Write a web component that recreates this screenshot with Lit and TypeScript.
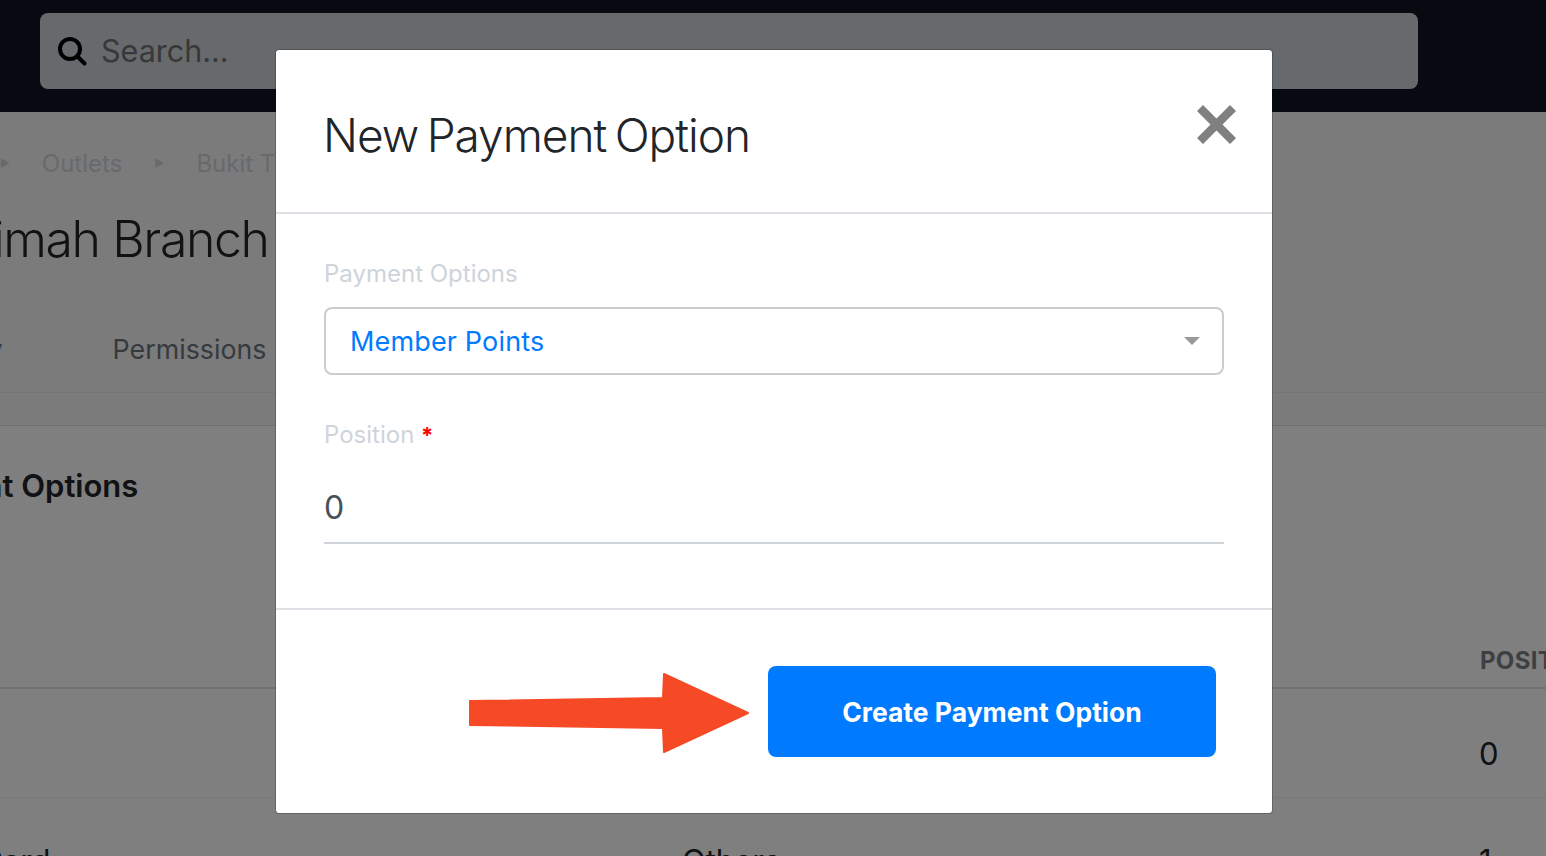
import { LitElement, html, css } from "lit";
import { customElement } from "lit/decorators.js";

@customElement("app-root")
export class AppRoot extends LitElement {
  static styles = css`
    :host { display: block; position: relative; width: 1546px; height: 856px; overflow: hidden; font-family: Inter, "Liberation Sans", sans-serif; background: #fff; color: #212529; }
    .page { display: flex; flex-direction: column; height: 856px; overflow: hidden; }
    .topbar { flex: none; height: 112px; box-sizing: border-box; padding: 13px 128px 23px 40px; background: #101424; }
    .search { display: flex; align-items: center; gap: 14px; height: 76px; box-sizing: border-box; padding: 0 17px 1px; border-radius: 8px; background: #cdd4d8; font-size: 30.5px; }
    .search svg { display: block; }
    .search span { color: #707070; }
    .head { flex: none; height: 281px; box-sizing: border-box; background: #f6f7f9; border-bottom: 1px solid #e9ebee; overflow: hidden; }
    .crumbs { display: flex; align-items: center; height: 26px; margin: 38px 0 0 -140px; font-size: 24px; color: #ced4da; gap: 32px; white-space: nowrap; }
    .crumbs i { font-style: normal; font-size: 11px; }
    h1 { margin: 33px 0 0 -158px; font-size: 50px; font-weight: 350; line-height: 60px; letter-spacing: -1.4px; white-space: nowrap; color: #212529; }
    .tabs { display: flex; gap: 110px; margin: 64px 0 0 -118px; font-size: 26.8px; line-height: 32px; color: #6c757d; white-space: nowrap; }
    .gap { flex: none; height: 32px; background: #f6f7f9; border-bottom: 1px solid #dfe1e4; }
    .card { flex: 1; background: #fff; }
    .card h2 { margin: 40px 0 0 -118px; font-size: 31px; font-weight: 600; line-height: 40px; white-space: nowrap; }
    .thead { height: 183px; box-sizing: border-box; padding-bottom: 12px; border-bottom: 2px solid #dee2e6; align-items: end; }
    .cols { display: grid; grid-template-columns: 682px 797px 1fr; }
    .th { margin-left: 1px; font-size: 24px; font-weight: 700; color: #7b8087; letter-spacing: .3px; white-space: nowrap; }
    .row { height: 109px; box-sizing: border-box; border-bottom: 1px solid #f1f3f5; padding-top: 46px; font-size: 31px; line-height: 38px; white-space: nowrap; }
    .row + .row { border: 0; padding-top: 44px; }
    .row .clip { margin-left: -117px; }
    .overlay { position: absolute; inset: 0; background: rgba(0,0,0,.5); }
    .modal { position: absolute; left: 275px; top: 49px; width: 998px; height: 765px; box-sizing: border-box; display: flex; flex-direction: column; background: #fff; border: 1px solid rgba(0,0,0,.2); background-clip: padding-box; border-radius: 4px; }
    .mhead { flex: none; height: 164px; box-sizing: border-box; display: flex; align-items: center; justify-content: space-between; padding: 8px 36px 0 47px; border-bottom: 2px solid #dee2e6; }
    .mhead h3 { margin: 0; font-size: 46px; font-weight: 350; line-height: 60px; white-space: nowrap; color: #212529; letter-spacing: -1px; word-spacing: -3.5px; }
    .mhead svg { display: block; margin-top: -22px; }
    .mbody { flex: 1; box-sizing: border-box; padding: 45px 48px 0; display: flex; flex-direction: column; }
    label { display: block; font-size: 24px; line-height: 30px; color: #ced4da; }
    label b { color: #f00; font-weight: 700; font-size: 22px; }
    .select { display: flex; align-items: center; justify-content: space-between; height: 68px; box-sizing: border-box; margin-top: 18px; padding: 0 22px 0 24px; border: 2px solid #ccc; border-radius: 8px; color: #007bff; font-size: 27px; letter-spacing: .15px; }
    .caret { width: 0; height: 0; border-left: 8px solid transparent; border-right: 8px solid transparent; border-top: 8px solid #999; }
    .pos { margin-top: 45px; }
    .input { height: 77px; box-sizing: border-box; margin-top: 17px; padding-top: 5px; border-bottom: 2px solid #ced4da; display: flex; align-items: center; font-size: 32px; color: #495057; }
    .mfoot { flex: none; height: 205px; box-sizing: border-box; display: flex; justify-content: flex-end; padding: 56px 56px 0 0; border-top: 2px solid #dee2e6; }
    .btn { width: 448px; height: 91px; border: 0; padding: 0; border-radius: 8px; background: #007bff; color: #fff; font: 700 26.5px Inter, "Liberation Sans", sans-serif; }
    .arrow { position: absolute; left: 469px; top: 673px; display: block; }
  `;

  render() {
    return html`
      <div class="page">
        <div class="topbar">
          <div class="search">
            <svg width="30" height="30" viewBox="0 0 30 30" fill="none" stroke="#000" stroke-width="4" stroke-linecap="round"><circle cx="13" cy="13" r="10"/><path d="M20.5 20.5 L27.5 27.5"/></svg>
            <span>Search...</span>
          </div>
        </div>
        <div class="head">
          <div class="crumbs"><span>Merchant</span><i>▶</i><span>Outlets</span><i>▶</i><span>Bukit Timah Branch</span></div>
          <h1>Bukit Timah Branch</h1>
          <div class="tabs"><span>Summary</span><span>Permissions</span></div>
        </div>
        <div class="gap"></div>
        <div class="card">
          <h2>Payment Options</h2>
          <div class="thead cols"><span></span><span></span><span class="th">POSITION</span></div>
          <div class="row cols"><span></span><span></span><span>0</span></div>
          <div class="row cols"><span class="clip">Credit Card</span><span>Others</span><span>1</span></div>
        </div>
      </div>
      <div class="overlay"></div>
      <div class="modal">
        <div class="mhead">
          <h3>New Payment Option</h3>
          <svg width="39" height="39" viewBox="0 0 39 39"><path d="M6 0 L19.5 13.5 L33 0 L39 6 L25.5 19.5 L39 33 L33 39 L19.5 25.5 L6 39 L0 33 L13.5 19.5 L0 6 Z" fill="#808080"/></svg>
        </div>
        <div class="mbody">
          <label>Payment Options</label>
          <div class="select"><span>Member Points</span><div class="caret"></div></div>
          <label class="pos">Position <b>*</b></label>
          <div class="input">0</div>
        </div>
        <div class="mfoot"><button class="btn">Create Payment Option</button></div>
      </div>
      <svg class="arrow" width="282" height="82" viewBox="0 0 282 82"><path d="M1 28 L194 25 L195 1 L279 40 L195 79 L194 55 L1 52 Z" fill="#f54a25" stroke="#f54a25" stroke-width="2" stroke-linejoin="round"/></svg>
    `;
  }
}
